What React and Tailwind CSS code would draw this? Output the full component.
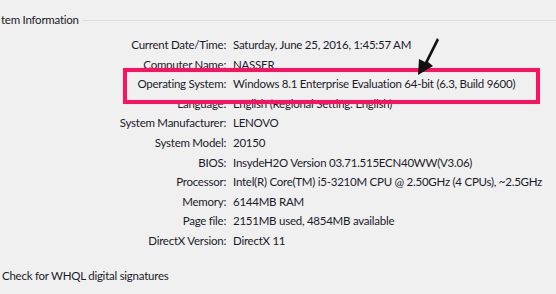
const ROWS = [
  ['Current Date/Time', 'Saturday, June 25, 2016, 1:45:57 AM'],
  ['Computer Name', 'NASSER'],
  ['Operating System', 'Windows 8.1 Enterprise Evaluation 64-bit (6.3, Build 9600)'],
  ['Language', 'English (Regional Setting: English)'],
  ['System Manufacturer', 'LENOVO'],
  ['System Model', '20150'],
  ['BIOS', 'InsydeH2O Version 03.71.515ECN40WW(V3.06)'],
  ['Processor', 'Intel(R) Core(TM) i5-3210M CPU @ 2.50GHz (4 CPUs), ~2.5GHz'],
  ['Memory', '6144MB RAM'],
  ['Page file', '2151MB used, 4854MB available'],
  ['DirectX Version', 'DirectX 11'],
];

export default function App() {
  return (
    <div className="relative w-[556px] h-[294px] overflow-hidden bg-[#f0f0f0] text-[#1b1b2b] text-[11.5px] tracking-[-0.25px]"
      style={{ fontFamily: 'Lato, "Open Sans", sans-serif' }}>
      {/* group box header */}
      <div className="flex items-center h-[14px] mt-[13px]">
        <span className="pl-[1px] pr-[3px] leading-[14px]">tem Information</span>
        <div className="flex-1 h-px bg-[#dcdcdc]" />
      </div>

      <div className="mt-[8px] flex flex-col">
        {ROWS.map(([label, value]) => (
          <div key={label} className="flex h-[19.6px] items-center leading-[19.6px] whitespace-nowrap">
            <div className="w-[226px] text-right">{label}:</div>
            <div className="pl-[7px]">{value}</div>
          </div>
        ))}
      </div>

      <div className="mt-[18px] pl-[2px] leading-[14px]">Check for WHQL digital signatures</div>

      {/* annotation box */}
      <div className="absolute left-[123px] top-[68px] w-[417px] h-[36px] border-4 border-[#ff1060]" />
      {/* annotation arrow */}
      <svg className="absolute left-0 top-0" width="556" height="294">
        <polygon points="437,38 439,40 428,62 433,66 418,75 419,59 425,62" fill="#111" />
      </svg>
    </div>
  );
}
